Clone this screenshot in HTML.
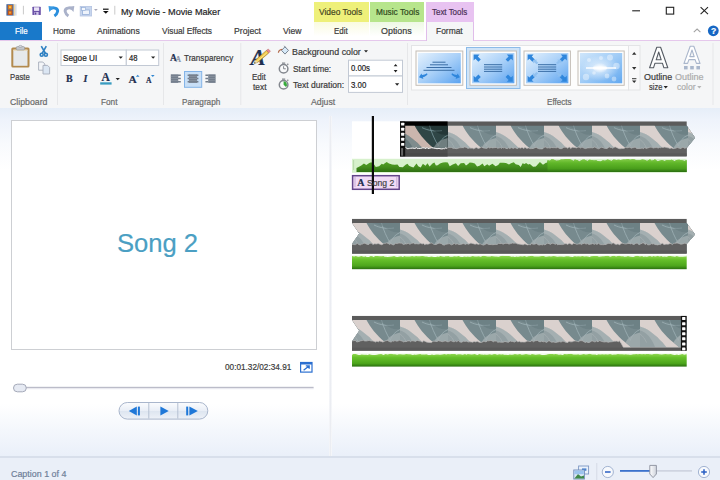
<!DOCTYPE html>
<html><head><meta charset="utf-8"><title>My Movie - Movie Maker</title>
<style>
*{box-sizing:border-box;margin:0;padding:0}
html,body{width:720px;height:480px;overflow:hidden;background:#fff}
body{position:relative;font-family:"Liberation Sans",sans-serif;font-size:9px;color:#333}
.a{position:absolute}
.t{position:absolute;white-space:nowrap;line-height:1;font-size:9px;color:#3b3b3b;-webkit-text-stroke:.2px}
.s{font-family:"Liberation Serif",serif;font-weight:bold;color:#1f3050}
#title{left:0;top:0;width:720px;height:22px;background:#fff}
#tabs{left:0;top:22px;width:720px;height:19px;background:#fff}
#file{left:0;top:22px;width:42px;height:18px;background:#1979ca}
#ribbon{left:0;top:41px;width:720px;height:67px;background:#f5f6f7}
#work{left:0;top:108px;width:720px;height:350px;background:linear-gradient(#e6eef8 0,#eef3fb 12px,#f8fafd 36px,#fff 62px,#fff 296px,#f4f7fc 322px,#e9eff9 350px)}
#status{left:0;top:456px;width:720px;height:24px;background:#eaeff8;border-top:2px solid #d8dfeb}
.ctx{position:absolute;top:2px;height:20px}
.ctxb{position:absolute;top:22px;height:18px}
.box{position:absolute;background:#fff;border:1px solid #c3cad4}
#preview{left:11px;top:120px;width:306px;height:230px;background:#fff;border:1px solid #cdcfd3}
#svg{position:absolute;left:0;top:0;width:720px;height:480px}
</style></head><body>
<div class="a" id="title"></div>
<div class="a" id="tabs"></div>
<div class="ctx" style="left:314px;width:55px;background:#eef07a"></div>
<div class="ctx" style="left:370px;width:54px;background:#b7e58c"></div>
<div class="ctx" style="left:426px;width:48px;background:#e8c3f1"></div>
<div class="ctxb" style="left:314px;width:55px;background:linear-gradient(#fafbe0,#fff 80%)"></div>
<div class="ctxb" style="left:370px;width:54px;background:linear-gradient(#eef8e4,#fff 80%)"></div>
<div class="a" style="left:0;top:40px;width:720px;height:1px;background:#e5c8ec"></div>
<div class="a" style="left:426px;top:22px;width:48px;height:19px;background:#f5f6f7;border-left:1px solid #e0bdea;border-right:1px solid #e0bdea"></div>
<div class="a" id="file"></div>
<div class="a" id="ribbon"></div>
<div class="a" id="work"></div>
<div class="a" style="left:329px;top:116px;width:3px;height:341px;background:linear-gradient(90deg,#f6f7fa,#ebedf2,#f9fafc)"></div>
<div class="a" id="status"></div>
<div class="a" id="preview"></div>
<svg id="svg" viewBox="0 0 720 480">
<defs>
<linearGradient id="gth" x1="0" y1="0" x2="1" y2="1"><stop offset="0" stop-color="#e4f1fd"/><stop offset=".5" stop-color="#a9d0f8"/><stop offset="1" stop-color="#5ba3f0"/></linearGradient>
<linearGradient id="gth4" x1="0" y1="0" x2="1" y2="1"><stop offset="0" stop-color="#cfe6fb"/><stop offset=".5" stop-color="#9fcbf6"/><stop offset="1" stop-color="#62a8f0"/></linearGradient>
<radialGradient id="glow"><stop offset="0" stop-color="#fff" stop-opacity="1"/><stop offset=".4" stop-color="#fff" stop-opacity=".55"/><stop offset="1" stop-color="#fff" stop-opacity="0"/></radialGradient>
<linearGradient id="gpill" x1="0" y1="0" x2="0" y2="1"><stop offset="0" stop-color="#fbfcfe"/><stop offset=".5" stop-color="#e9eef6"/><stop offset=".52" stop-color="#dde5f0"/><stop offset="1" stop-color="#eef2f8"/></linearGradient>
<linearGradient id="ggr" x1="0" y1="0" x2="0" y2="1"><stop offset="0" stop-color="#92d852"/><stop offset=".3" stop-color="#66c02a"/><stop offset=".75" stop-color="#4da61c"/><stop offset="1" stop-color="#2a7010"/></linearGradient>
<linearGradient id="ggd" x1="0" y1="0" x2="0" y2="1"><stop offset="0" stop-color="#5aa82c"/><stop offset=".6" stop-color="#448f1e"/><stop offset="1" stop-color="#2f6f12"/></linearGradient>
<linearGradient id="gthumb" x1="0" y1="0" x2="1" y2="0"><stop offset="0" stop-color="#fdfdfe"/><stop offset="1" stop-color="#cfd3dc"/></linearGradient>
<path id="arr" d="M0 0h5l-2.5 2.8z"/>
</defs>
<!-- window controls -->
<g stroke="#222" stroke-width="1.1" fill="none">
<path d="M632.2 10.8h7.8"/><rect x="666.3" y="7.3" width="7.4" height="6.8"/><path d="M700.6 7.2l7.4 7M708 7.2l-7.4 7"/>
</g>
<path d="M693.8 32.2l3.3-3.1 3.3 3.1" stroke="#a3a3a3" stroke-width="1.1" fill="none"/>
<circle cx="713.3" cy="30.8" r="5.4" fill="#1667c4"/>
<!-- QAT -->
<g>
<rect x="6.4" y="4.2" width="7.4" height="11.4" fill="#46669a"/>
<rect x="13.8" y="4.2" width="2.8" height="11.4" fill="#d9dfe8"/>
<rect x="13.8" y="4.2" width="1.2" height="11.4" fill="#f2d9a8"/>
<rect x="7.8" y="5" width="4.6" height="4.6" fill="#d9761e"/><rect x="7.8" y="10.4" width="4.6" height="4.6" fill="#c9581a"/>
<rect x="9" y="6.2" width="2.2" height="2" fill="#f6c040"/><rect x="9" y="11.6" width="2.2" height="2" fill="#f0a030"/>
<path d="M23.4 5.8v8.6M114.8 5.8v8.8" stroke="#c9c9c9" stroke-width="1"/>
<rect x="32.4" y="6.7" width="8.4" height="8.4" rx=".6" fill="#6b52a8"/>
<rect x="34" y="7.3" width="5.2" height="3.6" fill="#e9e2f6"/><rect x="34.4" y="12" width="4.2" height="3.1" fill="#cfc4ea"/><rect x="35" y="12.5" width="1.3" height="2.1" fill="#5a4296"/>
<path d="M50.600 8.600C54.500 7 58.200 8.400 57.600 11.600C57.200 13.600 56 15 54.400 16" stroke="#2b8fdd" stroke-width="2.900" fill="none"/><path d="M48.500 5.900l5.800.8-5 5.300z" fill="#3a9ae2"/>
<path d="M72.200 8.600C68.300 7 64.600 8.400 65.200 11.600C65.600 13.600 66.800 15 68.400 16" stroke="#aab2ca" stroke-width="2.900" fill="none"/><path d="M74.300 5.900l-5.800.8 5 5.300z" fill="#aab2ca"/>
<rect x="80.200" y="6.400" width="11.400" height="9.600" fill="#c7d6ee" stroke="#b4c4e2" stroke-width=".8"/>
<rect x="82.600" y="10" width="7" height="4.600" fill="#eef3fb" stroke="#8ea9d4" stroke-width=".7"/>
<rect x="81.600" y="7.600" width="4" height="2.800" fill="#f4f7fc" stroke="#8ea9d4" stroke-width=".6"/>
<use href="#arr" transform="translate(94 9) scale(.75)" fill="#a8a8b8"/>
<path d="M103 9.200h5.600" stroke="#111" stroke-width="1.200"/><path d="M103 10.900h5.600l-2.800 2.900z" fill="#111"/>
</g>
<!-- ribbon separators -->
<g stroke="#e6e7e9" stroke-width="1"><path d="M57.500 43v62M163.500 43v62M240.800 43v62M407.500 43v62M713 43v62"/></g>
<!-- combos -->
<g fill="#fff" stroke="#c2c9d4" stroke-width="1">
<rect x="61" y="50" width="65.300" height="15.500"/><rect x="126.300" y="50" width="32.400" height="15.500"/>
<rect x="348.500" y="60.200" width="54" height="15.800"/><rect x="348.500" y="76" width="54" height="16.400"/>
</g>
<g fill="#222">
<use href="#arr" transform="translate(118.600 56.400) scale(.85)"/><use href="#arr" transform="translate(151 56.400) scale(.85)"/>
<use href="#arr" transform="translate(115.600 77.900) scale(.85)"/>
<use href="#arr" transform="translate(364 50.300) scale(.8)"/>
<use href="#arr" transform="translate(395 83.300) scale(.85)"/>
<path d="M393.700 66.300h3.800l-1.900-2.400zM393.700 70h3.800l-1.900 2.400z"/>
</g>
<!-- paste -->
<rect x="11.300" y="47.600" width="18.200" height="20" rx="1.500" fill="#b38a4e"/>
<rect x="13.300" y="50" width="14.200" height="15.800" fill="#e6e9ec"/>
<rect x="13.300" y="49.400" width="14.200" height="1.400" fill="#e9d9b8"/><rect x="16.200" y="46.600" width="8.400" height="3.400" rx="1.200" fill="#c3c6cb" stroke="#8d9096" stroke-width=".6"/><rect x="18.800" y="45.400" width="3.200" height="2" rx="1" fill="#d9dbde" stroke="#8d9096" stroke-width=".5"/>
<!-- scissors -->
<g stroke="#2f80c2" fill="none" stroke-width="1.600"><path d="M41.300 46.200l4.200 7.300M46.300 46.200l-4.200 7.300"/><circle cx="41.700" cy="54.700" r="1.500"/><circle cx="45.900" cy="54.700" r="1.500"/></g>
<!-- copy -->
<g fill="#f3f5f8" stroke="#a6adba" stroke-width=".9"><path d="M38.600 62h4.200l2 2v6.200h-6.200z"/><path d="M43 65.400h4.600l2 2v6.600h-6.600z" fill="#dbe6f3"/></g>
<!-- font color underline -->
<rect x="100.200" y="82.300" width="11.400" height="2.300" fill="#3a9cc0"/>
<!-- grow/shrink arrows -->
<path d="M135.900 76.800l1.800-2 1.800 2z" fill="#2f86d0"/><path d="M151 75l1.800 2 1.800-2z" fill="#2f86d0"/>
<!-- align icons -->
<rect x="184.500" y="71.500" width="17.200" height="15.800" fill="#c8dff6" stroke="#84b4e8" stroke-width="1"/>
<g fill="#737e8c">
<rect x="170.800" y="74.300" width="7.400" height="8.600"/><rect x="188.900" y="74.300" width="8.200" height="8.600"/><rect x="208.200" y="74.300" width="7.400" height="8.600"/>
<path d="M178 74.500h2.800v1.500H178zM178 77.700h2.800v1.500H178zM178 80.900h2.800v1.500H178z"/>
<path d="M187.600 74.500h2v1.500h-2zM187.600 77.700h2v1.500h-2zM187.600 80.900h2v1.500h-2zM196.400 74.500h2v1.500h-2zM196.400 77.700h2v1.500h-2zM196.400 80.900h2v1.500h-2z"/>
<path d="M205.400 74.500h2.800v1.500h-2.800zM205.400 77.700h2.800v1.500h-2.800zM205.400 80.900h2.800v1.500h-2.800z"/>
</g>
<g stroke="#9aa3af" stroke-width=".5"><path d="M170.800 76.400h7.400M170.800 78.500h7.400M170.800 80.600h7.400M188.900 76.400h8.200M188.900 78.500h8.200M188.900 80.600h8.200M208.200 76.400h7.400M208.200 78.500h7.400M208.200 80.600h7.400"/></g>
<!-- paint bucket -->
<g><path d="M285 46.800l3.500 3.600-3.500 3.700-3.500-3.700z" fill="#d6e9f8" stroke="#6d7886" stroke-width=".9"/><path d="M282.200 49.400c-2.200.2-3.600 1.400-3.800 3.400" stroke="#b36b4c" stroke-width="1.200" fill="none"/><path d="M284.200 45.800l1.600 2" stroke="#6d7886" stroke-width=".8"/></g>
<!-- stopwatches -->
<g fill="#f9fafb" stroke="#83878e" stroke-width="1.500"><circle cx="283.600" cy="68.700" r="4.300"/><circle cx="283.600" cy="84.700" r="4.300"/></g>
<g stroke="#83878e" stroke-width="1.300" fill="none"><path d="M282 63.100h3.200M282 79.100h3.200M287.300 64.700l1-1M287.300 80.700l1-1"/></g>
<path d="M283.600 66.200v2.600h2.200" stroke="#83878e" stroke-width="1" fill="none"/>
<path d="M283.600 84.700v-3.400a3.400 3.400 0 0 1 2.400 5.800z" fill="#36ab3a"/>
<!-- gallery -->
<rect x="411.500" y="45.500" width="217" height="44.500" fill="#fdfdfd" stroke="#e3e4e6" stroke-width="1"/>
<rect x="628.500" y="45.500" width="11.500" height="44.500" fill="#f9f9fa" stroke="#e3e4e6" stroke-width="1"/>
<rect x="466.500" y="47.500" width="53.500" height="41" fill="#cfe4f8" stroke="#8cbbe8" stroke-width="1"/>
<g fill="#fdfdfd" stroke="#c4bdb6" stroke-width="1">
<rect x="416" y="51" width="46.800" height="34.300"/><rect x="470" y="51" width="46.400" height="34.300"/><rect x="524" y="51" width="46.400" height="34.300"/><rect x="578" y="51" width="46.200" height="34.300"/>
</g>
<rect x="418" y="53" width="42.800" height="30.300" fill="url(#gth)"/><rect x="472" y="53" width="42.400" height="30.300" fill="url(#gth)"/><rect x="526" y="53" width="42.400" height="30.300" fill="url(#gth)"/><rect x="580" y="53" width="42.200" height="30.300" fill="url(#gth4)"/>
<g stroke="#3b6ea6" stroke-width="1">
<path d="M432.500 62.200h13M430 64.800h18M426.500 67.500h25M423.500 70.300h31"/>
<path d="M484 64.700h18.200M484 67h18.200M484 69.200h18.200M484 71.400h18.200"/>
<path d="M538 64.700h18.200M538 67h18.200M538 69.200h18.200M538 71.400h18.200"/>
</g>
<g fill="#2f86dc">
<path d="M426.800 73.200l.8 1c-1.500 1.700-3 2.700-4.800 3.100l.6 1.700-4.400-1.800 2.400-3.800.6 1.600c1.800-.2 3.400-.9 4.800-1.800z"/>
<path d="M452.200 73.200l-.8 1c1.500 1.700 3 2.700 4.800 3.100l-.6 1.700 4.400-1.800-2.400-3.800-.6 1.600c-1.800-.2-3.400-.9-4.800-1.800z"/>
<g id="ca"><path d="M473.600 54.600h6l-1.800 1.800 3 3-2.400 2.400-3-3-1.800 1.800z"/><path d="M512.800 54.600v6l-1.800-1.800-3 3-2.400-2.400 3-3-1.800-1.800z"/><path d="M473.600 81.700v-6l1.800 1.800 3-3 2.400 2.400-3 3 1.800 1.800z"/><path d="M512.800 81.700h-6l1.800-1.800-3-3 2.400-2.400 3 3 1.800-1.800z"/></g>
<use href="#ca" x="54"/>
<g fill="#8fc0f0" opacity=".9"><use href="#ca" transform="translate(547.200 68.150) scale(.72 .62) translate(-493.200 -68.150)"/></g>
</g>
<!-- sparkle thumb -->
<g><ellipse cx="600" cy="68" rx="19" ry="13" fill="url(#glow)" opacity=".75"/><ellipse cx="600" cy="68" rx="8" ry="5" fill="url(#glow)"/><rect x="586" y="67.200" width="30" height="1.600" fill="#fff" opacity=".9"/><rect x="593" y="66.600" width="14" height="2.800" rx="1.400" fill="#fff" opacity=".8"/>
<g fill="#fff" opacity=".4"><circle cx="610" cy="57.500" r="3"/><circle cx="616.500" cy="66" r="3.200"/><circle cx="607" cy="76" r="2.400"/><circle cx="589" cy="60" r="2"/><circle cx="586" cy="77" r="3.200"/><circle cx="614" cy="79" r="2.400"/><circle cx="594" cy="73" r="1.800"/><circle cx="601" cy="58" r="2"/></g></g>
<!-- gallery scroll -->
<g fill="#333"><path d="M632 54.800h4.400l-2.200-2.700zM632 67h4.400l-2.200 2.700zM632 80.400h4.400l-2.200 2.700z"/><rect x="632" y="78.200" width="4.400" height="1"/></g>
<!-- outline A icons -->
<g fill="#fff" stroke-linejoin="round">
<path d="M649.600 67.800l7.200-20.600h3.800l7.200 20.600h-3.900l-1.500-4.600h-7.400l-1.500 4.600zM656.200 59.800h5l-2.500-7.800z" stroke="#555b63" stroke-width="1.100" fill-rule="evenodd"/>
<path d="M684 63.400l6.200-17.200h3.600l6.200 17.200h-3.600l-1.300-3.800h-6.200l-1.300 3.800zM689.800 56.600h4.400l-2.200-6.600z" stroke="#a9b6cb" stroke-width="1.100" fill-rule="evenodd"/>
</g>
<g fill="#a9b6cb"><rect x="684" y="66" width="3.600" height="3.400"/><rect x="690.200" y="66" width="3.600" height="3.400"/><rect x="696.400" y="66" width="3.600" height="3.400"/></g>
<use href="#arr" transform="translate(663.600 86) scale(.85)" fill="#222"/><use href="#arr" transform="translate(697.200 86) scale(.85)" fill="#b5b5b5"/>
<!-- fullscreen icon -->
<rect x="300.600" y="362.500" width="11.400" height="9.600" fill="#fff" stroke="#2b6fd0" stroke-width="1.200"/>
<rect x="300.600" y="362.500" width="11.400" height="2" fill="#2b6fd0"/>
<path d="M303.600 370.200l5.400-4.200M305.800 365.800h3.400v3" stroke="#2b6fd0" stroke-width="1.300" fill="none"/>
<!-- seek -->
<rect x="20" y="386.800" width="293.600" height="1.400" fill="#bbbcc9"/><rect x="20" y="388.200" width="293.600" height="1" fill="#e6e7ee"/>
<rect x="13.500" y="384.200" width="12.800" height="7.600" rx="3.800" fill="#e6eaf3" stroke="#a4a9b8" stroke-width="1"/>
<!-- play pill -->
<rect x="119" y="402.500" width="88.800" height="16.600" rx="8.300" fill="url(#gpill)" stroke="#a9b6cc" stroke-width="1"/>
<path d="M148.800 403v15.600M177.800 403v15.600" stroke="#b5c0d2" stroke-width="1"/>
<g fill="#1f78d8"><path d="M136.800 406.600v8.800l-8-4.400z"/><rect x="137.900" y="406.600" width="2" height="8.800"/>
<path d="M160.400 406.400v9.200l8.300-4.600z"/>
<rect x="186.200" y="406.600" width="2" height="8.800"/><path d="M189.400 406.600v8.800l8.400-4.400z"/></g>
<!-- status controls -->
<path d="M596.800 463v17" stroke="#d5dbe6" stroke-width="1"/>
<g><rect x="578.600" y="466" width="10" height="8" fill="#eaf1fb" stroke="#7d97c4" stroke-width=".9"/><rect x="582" y="468.400" width="4.400" height="2.400" fill="#4a82d0"/>
<rect x="573.800" y="470" width="10.600" height="9" fill="#dbe7f6" stroke="#6f8ab8" stroke-width=".9"/><path d="M574.400 478.400l3.600-4.400 3 2.600 3-1v2.800z" fill="#3f8a4a"/><rect x="574.400" y="470.600" width="9.400" height="3.600" fill="#9cc4ee"/></g>
<g fill="#f7f9fd" stroke="#a3b4d2" stroke-width="1"><circle cx="607.800" cy="472" r="5.600"/><circle cx="704" cy="472" r="5.600"/></g>
<path d="M605 472h5.600M701.200 472h5.600M704 469.200v5.600" stroke="#2a5fc4" stroke-width="1.500"/>
<rect x="620" y="470" width="33" height="1.800" fill="#3c72cc"/><rect x="653" y="470.200" width="39" height="1.400" fill="#c9cedb"/>
<path d="M649.800 465.400h6.600v8.600l-3.300 3.600-3.300-3.600z" fill="url(#gthumb)" stroke="#8a8f9c" stroke-width=".9"/>
<defs><symbol id="fs" viewBox="0 0 48 28" preserveAspectRatio="none">
<rect width="48" height="28" fill="#2f4646"/>
<path d="M0 6C8 8 16 15.500 22.500 22.500L27.500 28H0z" fill="#7f8c8d"/>
<path d="M0 10.500c5 1 9.500 5.500 13 12l2.500 5.500H0z" fill="#66777a"/>
<path d="M0 14c3 2 5 5 6.500 8.500" stroke="#7f8c8d" stroke-width=".8" fill="none"/>
<path d="M0 0h14.500c3.500 6.500 9.500 15 19 22.500l6.500 5.500h-13L22.500 22.500C16 15.500 8 8.500 0 6.500z" fill="#cbb6ae"/>
<path d="M29.500 0c2 7 5 14 9 20.500M22 2c6 3 13 4 20 3M38 20.500c2-5 5-9 10-11" stroke="#8fb0b6" stroke-width=".9" fill="none" opacity=".7"/>
<path d="M33.500 22.500c2.500-5 7-8.500 14.500-10V28h-8z" fill="#7f8c8d" opacity=".8"/>
<path d="M20 0h28v9c-6 1-10-1-14-4-3-2-8-4-14-5z" fill="#0e1c1c" opacity=".35"/>
</symbol><symbol id="fw" viewBox="0 0 48 28" preserveAspectRatio="none">
<rect width="48" height="28" fill="#778a8e"/>
<path d="M0 6C8 8 16 15.500 22.500 22.500L27.500 28H0z" fill="#a4afb1"/>
<path d="M0 10.500c5 1 9.500 5.500 13 12l2.500 5.500H0z" fill="#93a0a3"/>
<path d="M0 14c3 2 5 5 6.500 8.500" stroke="#a4afb1" stroke-width=".8" fill="none"/>
<path d="M0 0h14.500c3.500 6.500 9.500 15 19 22.500l6.500 5.500h-13L22.500 22.500C16 15.500 8 8.500 0 6.500z" fill="#dad1ce"/>
<path d="M29.500 0c2 7 5 14 9 20.500M22 2c6 3 13 4 20 3M38 20.500c2-5 5-9 10-11" stroke="#a9bcc1" stroke-width=".9" fill="none" opacity=".7"/>
<path d="M33.500 22.500c2.500-5 7-8.500 14.500-10V28h-8z" fill="#a4afb1" opacity=".8"/>
<path d="M20 0h28v9c-6 1-10-1-14-4-3-2-8-4-14-5z" fill="#5d7075" opacity=".35"/>
</symbol></defs>
<rect x="352" y="121.300" width="48" height="37.700" fill="#fff"/>
<clipPath id="c121"><path d="M400 121.3L686.7 121.3L686.7 125.6L695.1 137.8L686.7 147.9L686.7 156.6L400 156.6z"/></clipPath>
<g clip-path="url(#c121)">
<rect x="400" y="121.3" width="296.7" height="35.3" fill="#5b5b5b"/>
<use href="#fw" x="400" y="125.6" width="48" height="28"/>
<use href="#fw" x="448" y="125.6" width="48" height="28"/>
<use href="#fw" x="496" y="125.6" width="48" height="28"/>
<use href="#fw" x="544" y="125.6" width="48" height="28"/>
<use href="#fw" x="592" y="125.6" width="48" height="28"/>
<use href="#fw" x="640" y="125.6" width="48" height="28"/>
<use href="#fw" x="688" y="125.6" width="48" height="28"/>
<rect x="400" y="121.3" width="47.6" height="35.3" fill="#000"/>
<svg x="400" y="125.6" width="47.6" height="28" viewBox="0 0 47.6 28"><use href="#fs" x="0" y="0" width="48" height="28"/></svg>
<path d="M400 156.6L400 147.4L401.4 147.5L403 148L403.9 147L405.7 147.2L406.8 148.6L408.1 148.7L409.5 148.4L410.5 148.3L412.3 148.1L414 148.3L414.9 148.5L416.4 147.7L417.3 148.5L418.6 148.5L420.5 148.5L422.3 147.9L424.1 147.8L426 148.6L426.9 147.4L428 148.6L429.3 148.3L430.5 148L431.8 147.7L433.3 148L435.1 148.3L437 148.7L439 148.4L440 148.7L441.9 148.9L443.4 148.6L444.5 148.7L445.9 147.8L446.8 148.5L448.8 147.3L450.5 147.6L451.5 147.4L453.2 148.4L454.1 148.3L455 148.4L456.2 148.7L458.2 148.2L460.1 147.6L461.1 148L461.9 147.4L463.2 147.9L464.2 147.1L466.1 147.3L468 148.4L469.2 148L470.7 148.2L472.2 148.1L473.7 148.8L475.1 148L476.8 147.5L477.9 148.6L479.4 148.2L480.2 147.8L481.7 147L483.2 147.9L484.1 148.1L485.5 148.3L486.7 148.4L488.4 147.2L489.3 148L491.2 147.5L492.6 147.9L493.8 147.7L495 147.6L496.5 147.4L497.7 148.3L498.6 148.1L500.3 147.6L501.4 148.4L502.5 147.5L503.8 148.1L504.7 147.6L506 148.4L507.3 148.7L508.3 147.8L509.9 148.6L511.2 147.6L512.2 147.9L513.3 148.4L515 147.5L516.2 148.3L517.8 148.6L519 147.4L520.1 148.3L521.3 147.7L522.6 147.7L523.9 148.6L524.9 147.2L526.8 148.4L528.7 147.9L530.7 148.7L531.7 148.6L533.5 148.4L534.9 147.7L536.2 147.3L537.1 147.9L538.2 148.5L539.1 148.8L540.7 148.9L542.6 148.9L544.1 147.3L545.8 147.1L546.9 148L548.4 147.8L550.2 148.1L551.5 147.5L553.3 147.7L555 147.6L556.1 147.9L557.8 147.3L559.5 148.5L561.3 148.7L562.1 148.4L563.9 147.2L565.1 147.3L566.5 147.6L567.9 148.3L568.7 147.2L569.7 147L570.6 148.5L572.4 147.3L573.8 147.4L575 147.5L576.6 147.9L577.8 147.3L579 147L580.5 148L581.8 147.2L582.8 147.5L584.3 148.3L585.6 148.6L587.1 148L588.4 147.9L590 147.8L591.6 147.8L592.7 147.9L594.3 147.1L595.7 147.5L597.5 148.6L598.7 148.8L600.5 147.7L601.8 147.2L603.6 148L605.4 148.5L607 148.5L608.5 147.4L610 146.8L611 148.1L611.9 147.2L612.8 148.4L613.9 147.2L615.6 147L617.4 147.9L619.2 148.7L620.7 148.7L621.6 148.6L623 148.5L623.9 148.5L625.8 147.3L627 147.8L628.8 147.4L629.8 147.3L631.4 148.2L632.7 147.7L633.9 147.6L635.2 147L636.6 148.5L637.9 148.5L639 148.4L640.7 148.4L642.1 148L643.6 148.7L644.6 147.4L646.3 148.5L647.7 148L649.4 147.4L650.5 147.2L652 147.3L653.1 148.1L655 147.6L656.7 147.6L658.5 148L659.6 147.4L660.5 147.7L661.7 147.2L663 147.4L664.7 147.1L666.6 147.6L668.1 147.8L669.9 148.4L671.4 148L673 148.6L674.3 148.5L676.2 148L677.3 147.5L679 148.1L680.9 148.6L682 147.5L683.1 147.2L684.8 148.3L686.6 147.6L688.4 147.5L689.7 148.2L690.7 147.2L692.4 147.3L693.7 147.9L695.3 147L696.5 147.5L696.7 147.9L696.7 156.6z" fill="#606060"/>
<path d="M400 147.4L401.4 147.5L403 148L403.9 147L405.7 147.2L406.8 148.6L408.1 148.7L409.5 148.4L410.5 148.3L412.3 148.1L414 148.3L414.9 148.5L416.4 147.7L417.3 148.5L418.6 148.5L420.5 148.5L422.3 147.9L424.1 147.8L426 148.6L426.9 147.4L428 148.6L429.3 148.3L430.5 148L431.8 147.7L433.3 148L435.1 148.3L437 148.7L439 148.4L440 148.7L441.9 148.9L443.4 148.6L444.5 148.7L445.9 147.8L446.8 148.5L448.8 147.3L450.5 147.6L451.5 147.4L453.2 148.4L454.1 148.3L455 148.4L456.2 148.7L458.2 148.2L460.1 147.6L461.1 148L461.9 147.4L463.2 147.9L464.2 147.1L466.1 147.3L468 148.4L469.2 148L470.7 148.2L472.2 148.1L473.7 148.8L475.1 148L476.8 147.5L477.9 148.6L479.4 148.2L480.2 147.8L481.7 147L483.2 147.9L484.1 148.1L485.5 148.3L486.7 148.4L488.4 147.2L489.3 148L491.2 147.5L492.6 147.9L493.8 147.7L495 147.6L496.5 147.4L497.7 148.3L498.6 148.1L500.3 147.6L501.4 148.4L502.5 147.5L503.8 148.1L504.7 147.6L506 148.4L507.3 148.7L508.3 147.8L509.9 148.6L511.2 147.6L512.2 147.9L513.3 148.4L515 147.5L516.2 148.3L517.8 148.6L519 147.4L520.1 148.3L521.3 147.7L522.6 147.7L523.9 148.6L524.9 147.2L526.8 148.4L528.7 147.9L530.7 148.7L531.7 148.6L533.5 148.4L534.9 147.7L536.2 147.3L537.1 147.9L538.2 148.5L539.1 148.8L540.7 148.9L542.6 148.9L544.1 147.3L545.8 147.1L546.9 148L548.4 147.8L550.2 148.1L551.5 147.5L553.3 147.7L555 147.6L556.1 147.9L557.8 147.3L559.5 148.5L561.3 148.7L562.1 148.4L563.9 147.2L565.1 147.3L566.5 147.6L567.9 148.3L568.7 147.2L569.7 147L570.6 148.5L572.4 147.3L573.8 147.4L575 147.5L576.6 147.9L577.8 147.3L579 147L580.5 148L581.8 147.2L582.8 147.5L584.3 148.3L585.6 148.6L587.1 148L588.4 147.9L590 147.8L591.6 147.8L592.7 147.9L594.3 147.1L595.7 147.5L597.5 148.6L598.7 148.8L600.5 147.7L601.8 147.2L603.6 148L605.4 148.5L607 148.5L608.5 147.4L610 146.8L611 148.1L611.9 147.2L612.8 148.4L613.9 147.2L615.6 147L617.4 147.9L619.2 148.7L620.7 148.7L621.6 148.6L623 148.5L623.9 148.5L625.8 147.3L627 147.8L628.8 147.4L629.8 147.3L631.4 148.2L632.7 147.7L633.9 147.6L635.2 147L636.6 148.5L637.9 148.5L639 148.4L640.7 148.4L642.1 148L643.6 148.7L644.6 147.4L646.3 148.5L647.7 148L649.4 147.4L650.5 147.2L652 147.3L653.1 148.1L655 147.6L656.7 147.6L658.5 148L659.6 147.4L660.5 147.7L661.7 147.2L663 147.4L664.7 147.1L666.6 147.6L668.1 147.8L669.9 148.4L671.4 148L673 148.6L674.3 148.5L676.2 148L677.3 147.5L679 148.1L680.9 148.6L682 147.5L683.1 147.2L684.8 148.3L686.6 147.6L688.4 147.5L689.7 148.2L690.7 147.2L692.4 147.3L693.7 147.9L695.3 147L696.5 147.5L696.7 147.9" stroke="#b9b9b9" stroke-width=".8" fill="none" opacity=".85"/>
<rect x="400" y="153.4" width="286.7" height="3.200" fill="#555" opacity=".6"/>
<rect x="400" y="147.9" width="47.6" height="8.7" fill="#000" opacity=".18"/>
<path d="M405.7 147.2L406.8 148.6L408.1 148.7L409.5 148.4L410.5 148.3L412.3 148.1L414 148.3L414.9 148.5L416.4 147.7L417.3 148.5L418.6 148.5L420.5 148.5L422.3 147.9L424.1 147.8L426 148.6L426.9 147.4L428 148.6L429.3 148.3L430.5 148L431.8 147.7L433.3 148L435.1 148.3L437 148.7L439 148.4L440 148.7L441.9 148.9L443.4 148.6L444.5 148.7L445.9 147.8L446.8 148.5" stroke="#f0f0f0" stroke-width="1" fill="none"/>
<rect x="400" y="121.3" width="5.200" height="35.3" fill="#111"/>
<rect x="401.1" y="122.7" width="3.200" height="2.900" rx=".5" fill="#fff"/>
<rect x="401.1" y="127.8" width="3.200" height="2.900" rx=".5" fill="#fff"/>
<rect x="401.1" y="132.8" width="3.200" height="2.900" rx=".5" fill="#fff"/>
<rect x="401.1" y="137.8" width="3.200" height="2.900" rx=".5" fill="#fff"/>
<rect x="401.1" y="142.9" width="3.200" height="2.900" rx=".5" fill="#fff"/>
<rect x="401.1" y="148.1" width="2" height="7.600" fill="#8a8a8a" opacity=".7"/>
</g>
<rect x="352" y="158.800" width="334.700" height="14" fill="#d7f1cc"/>
<path d="M356.5 171.9L356.5 168L359 166.7L361.3 165.5L363.9 163.6L366.3 165L369.3 163L371.3 162.2L374.3 164.8L375.8 167.1L379.1 166.3L381.8 163.7L383.2 164.6L384.8 163.3L386.7 162.1L389 163.6L392.1 164.5L394.7 164.7L397.5 164.6L399.4 167L402.8 167.2L405.6 164.8L407.5 163.8L409 165.7L411.2 166.7L413.4 167.6L416.5 163.4L418.3 166.2L420.7 167.6L422.9 163.8L425.5 165.7L427.5 163.2L429.6 166.4L432.5 163.6L434.4 162.5L435.9 165.4L437.7 165.3L440 163.5L442.9 162.6L445.5 162.2L447.8 162.6L449.7 166.2L452.7 164.4L455.9 163.3L458.1 165.9L460.7 163.3L464.1 162.9L466 165.4L468.1 164.1L469.7 162.6L472.2 162.8L474.8 163.5L477.1 166.5L479.5 165.7L482.6 163.6L484.3 166.3L487.3 164.2L489.1 165.7L492.4 163.7L495.6 166.2L498.2 164.9L499.9 162.7L503.2 162.8L506 163L509 164.6L511 163.2L513.8 162.2L515.7 164.2L518.8 165.1L520.7 166.9L522.6 163.3L524.5 164L526.1 163L528.2 164.5L529.9 164.1L533.1 166.8L535.8 166.4L538.3 163.7L539.9 162.1L543 164.8L546.3 162.6L547 163L547.5 160.2L547.5 160.3L550 160.8L551.5 159.3L553.5 159.6L556.3 160.7L558.7 160.6L561.1 159.6L563.2 159.4L566.1 159.1L568.9 159.1L571.4 159.8L573.5 161.1L574.8 159.5L577.8 160.2L579.2 161.5L582.2 159.7L584.3 159.4L586.2 160.5L587.8 160.9L589.2 159.7L591.9 160L594 160.6L596.1 160.2L597.5 160.9L600.5 161.6L603 160.3L605 160.8L607.5 159.6L609.2 159.9L611.4 161L613.6 159.4L616.4 160L618.6 159.7L620.7 160L623.4 159.4L625.7 159.4L628.2 159.1L630 159.8L632.5 159.2L634.6 159.5L636.4 160.2L639.4 160.3L642.4 159.6L645.4 159.9L647 160.9L650 159.3L651.7 160.8L653.7 159.9L655 159.2L657.4 161.3L660.5 160.6L661.9 160L664.6 161.1L667 159.9L669.3 160.2L671.7 159.8L674.7 161.2L676.3 160.1L679.1 159.8L682.1 160.3L684.7 160.9L686.3 160L686.7 160.4L686.7 171.9z" fill="url(#ggd)"/>
<path d="M547.5 171.9L547.5 160.2L547.5 160.3L550 160.8L551.5 159.3L553.5 159.6L556.3 160.7L558.7 160.6L561.1 159.6L563.2 159.4L566.1 159.1L568.9 159.1L571.4 159.8L573.5 161.1L574.8 159.5L577.8 160.2L579.2 161.5L582.2 159.7L584.3 159.4L586.2 160.5L587.8 160.9L589.2 159.7L591.9 160L594 160.6L596.1 160.2L597.5 160.9L600.5 161.6L603 160.3L605 160.8L607.5 159.6L609.2 159.9L611.4 161L613.6 159.4L616.4 160L618.6 159.7L620.7 160L623.4 159.4L625.7 159.4L628.2 159.1L630 159.8L632.5 159.2L634.6 159.5L636.4 160.2L639.4 160.3L642.4 159.6L645.4 159.9L647 160.9L650 159.3L651.7 160.8L653.7 159.9L655 159.2L657.4 161.3L660.5 160.6L661.9 160L664.6 161.1L667 159.9L669.3 160.2L671.7 159.8L674.7 161.2L676.3 160.1L679.1 159.8L682.1 160.3L684.7 160.9L686.3 160L686.7 160.4L686.7 171.9z" fill="url(#ggr)" opacity=".75"/>
<path d="M353.600 160.500v10" stroke="#8ab07a" stroke-width=".8" stroke-dasharray="1 1"/>
<rect x="352.600" y="175.700" width="46.600" height="13.600" fill="#f1dbf6" stroke="#63458a" stroke-width="1.500"/>
<path d="M355 177.500v10M396.800 177.500v10" stroke="#8b6aa8" stroke-width=".8" stroke-dasharray="1 1"/>
<clipPath id="c218"><path d="M352 218.7L686.7 218.7L686.7 223L695.1 234.5L686.7 244L686.7 253.7L352 253.7L352 244L359.2 233.5L352 223z"/></clipPath>
<g clip-path="url(#c218)">
<rect x="352" y="218.7" width="344.7" height="35" fill="#5b5b5b"/>
<use href="#fw" x="352" y="223" width="48" height="28"/>
<use href="#fw" x="400" y="223" width="48" height="28"/>
<use href="#fw" x="448" y="223" width="48" height="28"/>
<use href="#fw" x="496" y="223" width="48" height="28"/>
<use href="#fw" x="544" y="223" width="48" height="28"/>
<use href="#fw" x="592" y="223" width="48" height="28"/>
<use href="#fw" x="640" y="223" width="48" height="28"/>
<use href="#fw" x="688" y="223" width="48" height="28"/>
<path d="M352 253.7L352 244.2L353.7 244.6L355.6 244.6L357.4 243.3L358.8 244.6L360.4 244.9L361.3 244.2L362.5 244.1L363.9 243.2L365 243.3L366.9 244.3L367.9 244.6L368.9 244.4L369.9 243.2L371.7 243.2L372.8 244.6L374.6 243.8L376.5 244L378.1 243.5L380 244.2L381.9 244.8L383.1 244L384.1 243.3L385 243.4L386.6 242.9L388.2 243.4L389.3 244.4L390.7 243.8L392.1 244.3L393 245L393.9 244.7L395.7 243.3L397.4 243.6L398.9 243L399.8 243.1L401.7 243.2L403.4 244.5L405.2 243.9L406.5 244L408.2 243.3L409.9 244.3L411.7 243.3L413.6 243L414.8 243.9L416.7 243.7L418.5 244L419.7 243.7L420.8 243.1L421.8 244.1L423.7 243.4L424.6 244.7L426.1 244L427.2 244.2L428.9 244L430.2 243.2L432.1 242.9L433.5 244.3L434.5 244.5L436.4 244.4L438.1 243.4L439.4 243.2L441.2 243.4L442.6 244.7L444.4 245.1L445.7 244.3L447.4 244.1L448.5 243.8L449.5 243.7L451.5 244.8L453 244.2L454.3 243.3L455.4 244.3L457.2 243.8L458.9 244.5L460.6 244.4L462.2 243.9L463.9 243.6L465.3 244.4L466.9 243.7L468.8 244.2L470.3 243.2L471.7 243.3L473.3 243.7L475.1 244.2L476.8 243.8L478.4 244.4L480.1 243.8L481.9 244.6L483.5 245.1L485.4 244.3L486.9 243.5L488.6 244.6L490 244.5L491.7 244.6L492.7 244.7L494.2 244.5L495.5 244.4L497.2 244.4L498.8 243.2L499.9 243.7L501.4 243.4L503 244.1L503.9 244L505 243.2L506 243.4L507.1 243.3L507.9 243.7L509.2 244.1L510.7 243.6L512.6 243L513.8 243.3L515.1 243.1L516.9 243.5L517.8 244.1L518.7 244.1L520 244.2L521.9 244.6L523.2 244.8L524.7 244L525.7 244.2L527.2 244.9L529.1 244.5L530.4 244.9L531.2 243.5L532.7 244.1L533.7 244.3L535.5 243.9L536.8 243.5L538 244.7L539.3 245L541.1 244.5L542.3 245L543.7 244.2L544.9 244.9L546.3 243.9L547.6 243.3L549.2 243.7L550.3 244.4L552.1 243.2L553.5 243.4L555.4 244.3L556.5 243.7L557.6 244.8L558.7 244.4L560.1 244.4L561.6 244.6L562.6 244.6L563.8 244.3L565 243.7L566.4 243.8L567.7 244.4L569.2 243.3L570.3 243.7L572.1 244.6L573.6 243.3L575.3 243.7L576.8 244.3L578.3 244L580.2 243.8L581.5 244.6L582.5 243.8L584.3 243.2L586.1 244.1L587.4 243.6L589.1 244.6L590.1 244.2L591.6 244L592.8 243.4L594.3 244.4L595.2 243.6L597 244.4L598.5 243.3L600.2 244.6L602.2 244.6L603 244.8L604.1 244.5L606 244.5L607 243.8L608.9 243.3L610.4 243.6L611.4 244.1L612.3 243.3L613.6 243L614.5 243.8L616.2 244.6L617.2 244.1L618.4 244.2L619.7 244.9L621 243.4L622.6 243.2L624.2 243.8L626 244L627.6 243.6L629 243.4L630.7 243.9L631.7 243.5L633 244.3L634 244.5L635.6 243.4L637.2 243.1L638.1 243.9L639.2 244.7L640.6 243.9L642.4 243.1L644 242.9L645 244.5L646.6 243.6L647.6 244.8L649.2 244.8L650.2 244.5L651.4 243.7L652.6 244.1L653.8 243.8L654.8 244.5L656.4 244.7L657.7 244.9L659.1 244.4L660.6 244.6L661.9 243.4L662.8 243.3L663.7 244.5L665.1 244.6L665.9 244.1L667.7 244.3L669.1 244L670 243.4L671 243.6L672.3 244.6L673.3 243.7L674.5 243.3L675.6 243.3L677 242.9L678.9 243.4L680.8 244.2L682.4 244L684.3 243.3L685.8 243.4L687.4 244.2L688.5 243.5L689.3 243.4L690.3 243.6L692.2 243.6L693.4 243.8L694.5 244.4L696.2 243.5L696.7 244L696.7 253.7z" fill="#606060"/>
<path d="M352 244.2L353.7 244.6L355.6 244.6L357.4 243.3L358.8 244.6L360.4 244.9L361.3 244.2L362.5 244.1L363.9 243.2L365 243.3L366.9 244.3L367.9 244.6L368.9 244.4L369.9 243.2L371.7 243.2L372.8 244.6L374.6 243.8L376.5 244L378.1 243.5L380 244.2L381.9 244.8L383.1 244L384.1 243.3L385 243.4L386.6 242.9L388.2 243.4L389.3 244.4L390.7 243.8L392.1 244.3L393 245L393.9 244.7L395.7 243.3L397.4 243.6L398.9 243L399.8 243.1L401.7 243.2L403.4 244.5L405.2 243.9L406.5 244L408.2 243.3L409.9 244.3L411.7 243.3L413.6 243L414.8 243.9L416.7 243.7L418.5 244L419.7 243.7L420.8 243.1L421.8 244.1L423.7 243.4L424.6 244.7L426.1 244L427.2 244.2L428.9 244L430.2 243.2L432.1 242.9L433.5 244.3L434.5 244.5L436.4 244.4L438.1 243.4L439.4 243.2L441.2 243.4L442.6 244.7L444.4 245.1L445.7 244.3L447.4 244.1L448.5 243.8L449.5 243.7L451.5 244.8L453 244.2L454.3 243.3L455.4 244.3L457.2 243.8L458.9 244.5L460.6 244.4L462.2 243.9L463.9 243.6L465.3 244.4L466.9 243.7L468.8 244.2L470.3 243.2L471.7 243.3L473.3 243.7L475.1 244.2L476.8 243.8L478.4 244.4L480.1 243.8L481.9 244.6L483.5 245.1L485.4 244.3L486.9 243.5L488.6 244.6L490 244.5L491.7 244.6L492.7 244.7L494.2 244.5L495.5 244.4L497.2 244.4L498.8 243.2L499.9 243.7L501.4 243.4L503 244.1L503.9 244L505 243.2L506 243.4L507.1 243.3L507.9 243.7L509.2 244.1L510.7 243.6L512.6 243L513.8 243.3L515.1 243.1L516.9 243.5L517.8 244.1L518.7 244.1L520 244.2L521.9 244.6L523.2 244.8L524.7 244L525.7 244.2L527.2 244.9L529.1 244.5L530.4 244.9L531.2 243.5L532.7 244.1L533.7 244.3L535.5 243.9L536.8 243.5L538 244.7L539.3 245L541.1 244.5L542.3 245L543.7 244.2L544.9 244.9L546.3 243.9L547.6 243.3L549.2 243.7L550.3 244.4L552.1 243.2L553.5 243.4L555.4 244.3L556.5 243.7L557.6 244.8L558.7 244.4L560.1 244.4L561.6 244.6L562.6 244.6L563.8 244.3L565 243.7L566.4 243.8L567.7 244.4L569.2 243.3L570.3 243.7L572.1 244.6L573.6 243.3L575.3 243.7L576.8 244.3L578.3 244L580.2 243.8L581.5 244.6L582.5 243.8L584.3 243.2L586.1 244.1L587.4 243.6L589.1 244.6L590.1 244.2L591.6 244L592.8 243.4L594.3 244.4L595.2 243.6L597 244.4L598.5 243.3L600.2 244.6L602.2 244.6L603 244.8L604.1 244.5L606 244.5L607 243.8L608.9 243.3L610.4 243.6L611.4 244.1L612.3 243.3L613.6 243L614.5 243.8L616.2 244.6L617.2 244.1L618.4 244.2L619.7 244.9L621 243.4L622.6 243.2L624.2 243.8L626 244L627.6 243.6L629 243.4L630.7 243.9L631.7 243.5L633 244.3L634 244.5L635.6 243.4L637.2 243.1L638.1 243.9L639.2 244.7L640.6 243.9L642.4 243.1L644 242.9L645 244.5L646.6 243.6L647.6 244.8L649.2 244.8L650.2 244.5L651.4 243.7L652.6 244.1L653.8 243.8L654.8 244.5L656.4 244.7L657.7 244.9L659.1 244.4L660.6 244.6L661.9 243.4L662.8 243.3L663.7 244.5L665.1 244.6L665.9 244.1L667.7 244.3L669.1 244L670 243.4L671 243.6L672.3 244.6L673.3 243.7L674.5 243.3L675.6 243.3L677 242.9L678.9 243.4L680.8 244.2L682.4 244L684.3 243.3L685.8 243.4L687.4 244.2L688.5 243.5L689.3 243.4L690.3 243.6L692.2 243.6L693.4 243.8L694.5 244.4L696.2 243.5L696.7 244" stroke="#b9b9b9" stroke-width=".8" fill="none" opacity=".85"/>
<rect x="352" y="250.5" width="334.7" height="3.200" fill="#555" opacity=".6"/>
</g>
<rect x="352" y="255.600" width="334.700" height="13.600" fill="url(#ggr)"/>
<path d="M352 255L352 256L354.1 256.5L355.8 256.1L358.1 256.7L359.9 256.5L361.3 255.9L362.9 256.4L364.1 256.7L365.5 256.2L366.7 256.9L368.8 256.9L370.8 256L372.3 256.3L373.6 256.9L375.2 256.1L377.4 255.9L379.8 256.3L381.7 256.2L383.5 256L384.6 256.7L386.1 256.8L387.4 257L389.8 256.8L392 256.6L394.1 256L395.9 256.7L397.2 256.9L399.6 256.4L401.2 256.3L402.8 256.9L404.5 256L405.7 256.6L408.2 256.4L410 256.5L412.1 256.1L414.1 256.4L416.1 256L417.4 256.2L419.8 256.2L421.8 256.1L423 255.9L425.2 256.6L426.9 256.6L428.9 256.9L431.4 256.4L433.9 256.9L435.8 256.9L437.6 256.4L439 256.8L440.3 256L442.6 256.6L444.4 256.8L445.5 256.2L447 256.3L448.3 255.9L449.9 256.7L452.4 256.7L454.2 256.2L456.6 256.4L458.8 255.9L460.1 256.7L462.4 256.9L464.3 256.4L466.2 256.8L467.8 256.5L469.2 256.7L470.3 256.7L472.8 255.9L474.7 256.5L477 256.5L478.5 256.3L480.9 256.8L482.2 256L483.4 255.8L485.1 255.9L487.5 256.5L488.7 256.5L490.3 256.4L491.7 256L493 256.2L495.1 256.4L496.3 256.6L498.6 256.8L500.8 255.9L502.6 255.8L504.8 255.9L506.9 256L509 256.1L510.1 256.2L511.6 256.8L513.1 256.5L515 256.9L516.2 256.6L518 256.7L520.5 256.2L522.6 256.4L524.5 255.9L526.7 256.8L528.3 256.3L530.8 255.9L532 255.8L534.3 256.6L536 256.6L537.1 256.6L538.8 256.5L540.5 256.3L541.9 255.9L543.6 256L545.7 256.7L547.8 256.4L549.2 256.3L551 256.5L553.5 256L555.2 256.3L557.3 256.8L559.5 256.6L561.7 256.6L564 256.7L566.1 256.2L568.5 256.2L570.5 256.7L572.9 257L574 256.3L575.5 256.3L576.8 256.4L578 256.2L580.5 256.6L582.2 256L584.7 256.5L586 256.2L588.1 256.6L589.5 256.9L591.1 256.2L593.3 256L595.4 256L597.4 256.1L599 256.8L600.7 256.4L602.7 256.2L604 256.2L605.5 256L608 255.8L610.2 256.8L612.3 255.9L614.1 255.8L616.1 256.5L617.5 255.9L619.4 255.8L620.9 256.2L623.2 256.2L624.5 256.7L626.8 256.5L627.9 256.1L629.6 256.4L631 256.7L633.3 256.9L635.6 256L637.6 255.8L639.9 256.6L642.1 256.1L643.3 256.7L645.2 256.6L647 256.8L648.6 256.2L650.1 256.1L652.1 256.8L653.3 256L655.1 256.5L656.5 256.2L657.6 255.8L659.4 256.5L661.5 256L662.7 256.8L664.5 256.4L666.6 256.7L668.5 256L670.7 256L671.9 256.2L673.7 256.5L675 256.7L676.8 256.1L679.1 256.7L681.5 256.7L682.9 256.8L685.3 256.5L686.7 256.4L686.700 255z" fill="#f4fbef"/>
<clipPath id="c315"><path d="M352 315.8L686.7 315.8L686.7 350.8L352 350.8L352 341.4L359.2 330.7L352 320z"/></clipPath>
<g clip-path="url(#c315)">
<rect x="352" y="315.8" width="344.7" height="35" fill="#5b5b5b"/>
<use href="#fw" x="352" y="320" width="48" height="28"/>
<use href="#fw" x="400" y="320" width="48" height="28"/>
<use href="#fw" x="448" y="320" width="48" height="28"/>
<use href="#fw" x="496" y="320" width="48" height="28"/>
<use href="#fw" x="544" y="320" width="48" height="28"/>
<use href="#fw" x="592" y="320" width="48" height="28"/>
<use href="#fw" x="640" y="320" width="48" height="28"/>
<use href="#fw" x="688" y="320" width="48" height="28"/>
<path d="M352 350.8L352 340.9L353.9 340.6L355.5 340.4L356.7 342L357.7 341.8L359.1 341.4L360.5 340.9L362.3 340.5L363.4 340.3L364.5 340.9L366.3 341L367.3 340.8L369.3 340.4L370.8 340.9L372.4 341L374 341.3L375.6 342.1L377.1 341L378 342.1L379.4 341L381.3 341.4L382.9 342.1L384.1 341.4L385.9 340.7L387.6 340.5L389.2 341.5L391.1 342.1L392.5 341L393.5 341.3L394.9 340.6L396.8 341.2L398.4 340.8L399.5 340.3L400.7 340.7L402.1 341L403.8 342L404.9 341.4L405.9 341.7L407.8 340.9L409.5 340.9L410.4 341.7L411.6 340.9L412.9 340.8L414.2 341.1L415.5 341.5L416.7 340.7L417.6 340.5L419.1 340.9L420.8 341.2L422.4 342.2L423.3 340.8L424.3 341L425.8 341.7L427.1 342.3L427.9 342.3L429 342.4L429.9 342.5L431.5 342.6L433 341.2L435 341.2L435.9 341.5L437.3 341.4L438.3 340.7L439.8 341.1L440.8 341.2L442.4 341.7L443.8 341.3L445 340.9L446.1 341.1L447.1 341.7L448.7 341.7L449.6 341.2L450.9 340.6L452.8 341.6L454.2 341.8L455.3 341L456.7 341.7L458.3 340.6L459.8 341.9L461.5 342.3L463.4 341.2L464.6 341.4L466.5 341.2L468.4 342L469.8 341.8L471.7 342L472.9 342.2L474 341.4L475.9 342L477.1 341.2L478.6 342L480.2 342.4L481.9 342.3L483.4 341.4L484.7 341.4L486.1 342L487.3 340.8L488.9 340.8L490.2 340.5L492 340.7L493.2 341.8L494.6 341.1L496.4 341.1L497.7 342.2L499.4 342.1L500.5 342.2L502 342.2L503.3 342.2L505 341.4L506.6 341.9L508.5 342.3L510.2 341L511.8 341.6L512.7 341.4L514.5 342.1L516.4 340.9L517.9 341.9L519.5 341.2L520.4 342.1L522.2 341.9L523.4 342.1L525.2 342L526.7 341.3L527.9 341.1L529.1 341.3L530 341.8L531.3 340.9L532.4 341L533.7 341.8L534.7 341L535.8 340.7L537.5 340.5L538.4 341.2L540.1 341.9L541.5 341.2L543.4 341.8L544.7 341.6L546.6 342.4L548.5 341L549.7 341.1L550.8 341.8L551.7 342.2L553.2 341.9L554.5 342.3L555.9 342.4L557.8 342L559.8 341.6L561 342.1L562.4 341.3L564 341.3L565 342L566.4 342.4L567.9 342.5L569 341.2L570.5 341.8L572.2 341.8L573.2 341.3L574.1 341.1L576 341L577.6 341.5L578.6 341.8L579.5 340.9L581 340.6L582.9 341L584.5 342.1L585.5 342.5L586.3 341.9L587.9 342.4L589.2 342.5L590.7 341.7L591.7 341L593 341L594.3 341.8L595.5 341.8L596.4 340.9L598 341.9L599.2 340.7L600.3 340.9L601.6 341.4L602.8 341.7L604.5 342L606.1 341.7L607.3 342.1L608.4 342.3L609.8 341.9L611.2 341.8L612.4 341.7L614.1 341.2L615.6 341.3L616.9 341.1L618.4 341.7L619.4 340.8L620 341.7L621.2 343.4L623.4 347.4L696.7 347.4L696.7 350.8z" fill="#606060"/>
<path d="M352 340.9L353.9 340.6L355.5 340.4L356.7 342L357.7 341.8L359.1 341.4L360.5 340.9L362.3 340.5L363.4 340.3L364.5 340.9L366.3 341L367.3 340.8L369.3 340.4L370.8 340.9L372.4 341L374 341.3L375.6 342.1L377.1 341L378 342.1L379.4 341L381.3 341.4L382.9 342.1L384.1 341.4L385.9 340.7L387.6 340.5L389.2 341.5L391.1 342.1L392.5 341L393.5 341.3L394.9 340.6L396.8 341.2L398.4 340.8L399.5 340.3L400.7 340.7L402.1 341L403.8 342L404.9 341.4L405.9 341.7L407.8 340.9L409.5 340.9L410.4 341.7L411.6 340.9L412.9 340.8L414.2 341.1L415.5 341.5L416.7 340.7L417.6 340.5L419.1 340.9L420.8 341.2L422.4 342.2L423.3 340.8L424.3 341L425.8 341.7L427.1 342.3L427.9 342.3L429 342.4L429.9 342.5L431.5 342.6L433 341.2L435 341.2L435.9 341.5L437.3 341.4L438.3 340.7L439.8 341.1L440.8 341.2L442.4 341.7L443.8 341.3L445 340.9L446.1 341.1L447.1 341.7L448.7 341.7L449.6 341.2L450.9 340.6L452.8 341.6L454.2 341.8L455.3 341L456.7 341.7L458.3 340.6L459.8 341.9L461.5 342.3L463.4 341.2L464.6 341.4L466.5 341.2L468.4 342L469.8 341.8L471.7 342L472.9 342.2L474 341.4L475.9 342L477.1 341.2L478.6 342L480.2 342.4L481.9 342.3L483.4 341.4L484.7 341.4L486.1 342L487.3 340.8L488.9 340.8L490.2 340.5L492 340.7L493.2 341.8L494.6 341.1L496.4 341.1L497.7 342.2L499.4 342.1L500.5 342.2L502 342.2L503.3 342.2L505 341.4L506.6 341.9L508.5 342.3L510.2 341L511.8 341.6L512.7 341.4L514.5 342.1L516.4 340.9L517.9 341.9L519.5 341.2L520.4 342.1L522.2 341.9L523.4 342.1L525.2 342L526.7 341.3L527.9 341.1L529.1 341.3L530 341.8L531.3 340.9L532.4 341L533.7 341.8L534.7 341L535.8 340.7L537.5 340.5L538.4 341.2L540.1 341.9L541.5 341.2L543.4 341.8L544.7 341.6L546.6 342.4L548.5 341L549.7 341.1L550.8 341.8L551.7 342.2L553.2 341.9L554.5 342.3L555.9 342.4L557.8 342L559.8 341.6L561 342.1L562.4 341.3L564 341.3L565 342L566.4 342.4L567.9 342.5L569 341.2L570.5 341.8L572.2 341.8L573.2 341.3L574.1 341.1L576 341L577.6 341.5L578.6 341.8L579.5 340.9L581 340.6L582.9 341L584.5 342.1L585.5 342.5L586.3 341.9L587.9 342.4L589.2 342.5L590.7 341.7L591.7 341L593 341L594.3 341.8L595.5 341.8L596.4 340.9L598 341.9L599.2 340.7L600.3 340.9L601.6 341.4L602.8 341.7L604.5 342L606.1 341.7L607.3 342.1L608.4 342.3L609.8 341.9L611.2 341.8L612.4 341.7L614.1 341.2L615.6 341.3L616.9 341.1L618.4 341.7L619.4 340.8L620 341.7L621.2 343.4L623.4 347.4L696.7 347.4" stroke="#b9b9b9" stroke-width=".8" fill="none" opacity=".85"/>
<rect x="352" y="347.6" width="334.7" height="3.200" fill="#555" opacity=".6"/>
<rect x="680.9" y="315.8" width="5.800" height="35" fill="#111"/>
<rect x="682.1" y="317.1" width="3.300" height="3" rx=".5" fill="#fff"/>
<rect x="682.1" y="322.2" width="3.300" height="3" rx=".5" fill="#fff"/>
<rect x="682.1" y="327.2" width="3.300" height="3" rx=".5" fill="#fff"/>
<rect x="682.1" y="332.2" width="3.300" height="3" rx=".5" fill="#fff"/>
<rect x="682.1" y="337.3" width="3.300" height="3" rx=".5" fill="#fff"/>
<rect x="682.1" y="342.4" width="3.300" height="3" rx=".5" fill="#fff"/>
<rect x="682.1" y="347.4" width="3.300" height="3" rx=".5" fill="#fff"/>
</g>
<rect x="352" y="353.600" width="334.700" height="13" fill="url(#ggr)"/>
<path d="M352 353L352 354.9L353.3 354L355.8 354L357.1 354.5L358.6 354.9L360 355L361.6 354.6L364 354.7L366.4 354.7L367.6 354.9L369.5 354.3L370.9 354.8L372.8 355L375 355L376.9 354.7L378.8 354.2L381.3 354.1L383.5 354.9L385.5 354.1L387.8 354.5L389.1 353.9L391 353.8L393.4 354.3L395.2 354.3L397.2 354.8L398.8 354.3L400.7 354.2L402.6 354.4L404.3 354.6L406.2 354L408.7 354.2L410.4 354.2L412.8 354.9L414.6 354.4L415.8 354.8L417.2 354.5L418.7 354.2L420.3 354L421.5 354.4L423.7 354.6L425.1 354.6L426.2 354.3L428.5 354.9L430.2 354.9L432 354.5L433.9 355L436.1 354.5L438.2 354.6L439.8 354.8L442.1 354.6L444.5 353.9L446.3 354.5L447.9 354L450 354.3L451.4 353.9L453.9 354.1L455.2 354L456.6 354.7L457.9 354.2L459.2 354.3L460.5 354.2L462.7 354.8L465 354L466.6 354.7L467.7 354.1L469.5 354.2L471.7 354.6L473.4 354.2L474.8 354.1L476 354.5L477.3 354.9L479.3 354L481.1 354.4L482.2 354.4L483.4 354.7L484.5 354.6L487 354.8L488.4 354.5L489.7 354.2L492 354.7L493.1 354.3L495.1 354L497.3 354.8L499.2 354.3L501.5 354.4L502.8 354.2L504.1 354.7L506 354.7L508.2 355L509.6 354.4L511.9 354.7L513.5 354.6L514.9 354.1L516.1 354.2L517.5 354.4L520 354L521.8 354.7L523.8 354.5L526 353.9L528.4 354.5L530.7 354.8L531.9 354L533.2 354.3L535.6 354.8L537.3 354.6L539.5 354.3L541.9 354.9L544.1 354.9L546.3 354.7L547.8 354.2L549.3 353.9L551.7 354.1L552.8 354.1L554 354.3L555.6 354L557.3 354.2L558.9 354.7L560.5 354.5L562.8 354.9L564.4 354L566.9 354.3L568.3 354L569.7 354.1L571 353.8L573.5 354.6L574.7 354.4L577 354.4L578.1 354.2L579.8 354.8L581.7 354.4L583.7 353.9L585.7 354.6L587.8 354.3L589.3 353.8L590.5 353.9L592.2 354.6L593.6 354.4L595.6 354.5L596.7 354.9L598.6 354.3L600.1 354.6L602.5 354.3L604.1 354.4L605.5 354.3L607.9 354.4L610.1 354.1L612.5 354.7L613.9 354.5L615.9 354.5L617.9 354.1L619.8 354.2L622 354.2L624.5 354.5L625.9 354.3L627.1 354.6L628.3 354.6L629.8 354.7L631.1 354.7L633.2 354.2L634.5 354.2L636.5 354.1L637.6 354.3L639.8 354L642.2 354.3L643.5 353.9L645.2 354.3L646.5 353.9L648.3 354L650 354.3L652.1 354.5L653.5 354.1L655.8 353.8L657.1 353.8L659.4 354.3L661.8 354.5L663.3 354.3L665.5 354.1L667.7 354.2L668.8 354.2L670.7 354L673.1 354.8L674.9 354.9L677 354.5L678.3 354.9L680.7 354.5L682.3 353.9L684.3 354.7L686 354.2L686.7 354.4L686.700 353z" fill="#f4fbef"/>
<rect x="371.800" y="116" width="2.200" height="78" fill="#0a0a0a"/>
</svg>
<span class="t" id="t0" style="left:120.8px;top:6.59px;font-size:9.7px;color:#1e1e1e;transform-origin:0 0;transform:scaleX(0.9401);">My Movie - Movie Maker</span>
<span class="t" id="t1" style="left:14.8px;top:27.28px;font-size:9px;color:#fff;transform-origin:0 0;transform:scaleX(0.8818);">File</span>
<span class="t" id="t2" style="left:52.5px;top:27.28px;font-size:9px;color:#3b3b3b;transform-origin:0 0;transform:scaleX(0.9161);">Home</span>
<span class="t" id="t3" style="left:97px;top:27.28px;font-size:9px;color:#3b3b3b;transform-origin:0 0;transform:scaleX(0.9589);">Animations</span>
<span class="t" id="t4" style="left:162px;top:27.28px;font-size:9px;color:#3b3b3b;transform-origin:0 0;transform:scaleX(0.9225);">Visual Effects</span>
<span class="t" id="t5" style="left:234px;top:27.28px;font-size:9px;color:#3b3b3b;transform-origin:0 0;transform:scaleX(0.9637);">Project</span>
<span class="t" id="t6" style="left:282.5px;top:27.28px;font-size:9px;color:#3b3b3b;transform-origin:0 0;transform:scaleX(0.9556);">View</span>
<span class="t" id="t7" style="left:333.8px;top:27.28px;font-size:9px;color:#3b3b3b;transform-origin:0 0;transform:scaleX(0.8830);">Edit</span>
<span class="t" id="t8" style="left:381.3px;top:27.28px;font-size:9px;color:#3b3b3b;transform-origin:0 0;transform:scaleX(0.9893);">Options</span>
<span class="t" id="t9" style="left:436.3px;top:27.28px;font-size:9px;color:#3b3b3b;transform-origin:0 0;transform:scaleX(0.9363);">Format</span>
<span class="t" id="t10" style="left:319.3px;top:8.48px;font-size:9px;color:#45451f;transform-origin:0 0;transform:scaleX(0.9347);">Video Tools</span>
<span class="t" id="t11" style="left:375.5px;top:8.48px;font-size:9px;color:#2f4a20;transform-origin:0 0;transform:scaleX(0.9240);">Music Tools</span>
<span class="t" id="t12" style="left:431.8px;top:8.48px;font-size:9px;color:#4a2f55;transform-origin:0 0;transform:scaleX(0.8831);">Text Tools</span>
<span class="t" id="t13" style="left:710.9px;top:27.30px;font-size:8.5px;color:#fff;transform-origin:0 0;transform:scaleX(1.0000);font-weight:bold">?</span>
<span class="t" id="t14" style="left:10px;top:73.28px;font-size:9px;color:#3b3b3b;transform-origin:0 0;transform:scaleX(0.8559);">Paste</span>
<span class="t" id="t15" style="left:9.5px;top:97.98px;font-size:9px;color:#6a6a6a;transform-origin:0 0;transform:scaleX(0.9732);">Clipboard</span>
<span class="t" id="t16" style="left:63.3px;top:54.08px;font-size:9px;color:#222;transform-origin:0 0;transform:scaleX(0.9112);">Segoe UI</span>
<span class="t" id="t17" style="left:129px;top:54.08px;font-size:9px;color:#222;transform-origin:0 0;transform:scaleX(0.8487);">48</span>
<span class="t s" id="t18" style="left:66px;top:74.23px;font-size:10px;color:#1f3050;transform-origin:0 0;transform:scaleX(1.0000);">B</span>
<span class="t s" id="t19" style="left:83.5px;top:74.23px;font-size:10px;color:#1f3050;transform-origin:0 0;transform:scaleX(1.0000);font-style:italic">I</span>
<span class="t s" id="t20" style="left:101.6px;top:72.47px;font-size:11.5px;color:#1f3050;transform-origin:0 0;transform:scaleX(1.0000);">A</span>
<span class="t s" id="t21" style="left:128.6px;top:73.95px;font-size:11.4px;color:#1f3050;transform-origin:0 0;transform:scaleX(1.0000);">A</span>
<span class="t s" id="t22" style="left:146px;top:77.14px;font-size:7.6px;color:#1f3050;transform-origin:0 0;transform:scaleX(1.0000);">A</span>
<span class="t" id="t23" style="left:101px;top:97.98px;font-size:9px;color:#6a6a6a;transform-origin:0 0;transform:scaleX(0.9159);">Font</span>
<span class="t s" id="t24" style="left:170px;top:53.94px;font-size:9.5px;color:#1f3050;transform-origin:0 0;transform:scaleX(1.0000);">A</span>
<span class="t s" id="t25" style="left:175.6px;top:55.62px;font-size:7.5px;color:#8a93a5;transform-origin:0 0;transform:scaleX(1.0000);">A</span>
<span class="t" id="t26" style="left:183.8px;top:54.08px;font-size:9px;color:#3b3b3b;transform-origin:0 0;transform:scaleX(0.8994);">Transparency</span>
<span class="t" id="t27" style="left:181.7px;top:97.98px;font-size:9px;color:#6a6a6a;transform-origin:0 0;transform:scaleX(0.9112);">Paragraph</span>
<span class="t s" id="t28" style="left:250.6px;top:46.76px;font-size:22.5px;color:#1f3050;transform-origin:0 0;transform:scaleX(1.0000);font-style:italic">A</span>
<span class="t" id="t29" style="left:252px;top:73.28px;font-size:9px;color:#3b3b3b;transform-origin:0 0;transform:scaleX(0.8894);">Edit</span>
<span class="t" id="t30" style="left:252.5px;top:82.78px;font-size:9px;color:#3b3b3b;transform-origin:0 0;transform:scaleX(0.9300);">text</span>
<span class="t" id="t31" style="left:292px;top:48.28px;font-size:9px;color:#3b3b3b;transform-origin:0 0;transform:scaleX(0.9822);">Background color</span>
<span class="t" id="t32" style="left:292.8px;top:64.58px;font-size:9px;color:#3b3b3b;transform-origin:0 0;transform:scaleX(0.9314);">Start time:</span>
<span class="t" id="t33" style="left:292.8px;top:80.78px;font-size:9px;color:#3b3b3b;transform-origin:0 0;transform:scaleX(0.9476);">Text duration:</span>
<span class="t" id="t34" style="left:350.5px;top:64.48px;font-size:9px;color:#222;transform-origin:0 0;transform:scaleX(0.8624);">0.00s</span>
<span class="t" id="t35" style="left:350.5px;top:80.78px;font-size:9px;color:#222;transform-origin:0 0;transform:scaleX(0.8727);">3.00</span>
<span class="t" id="t36" style="left:310.8px;top:97.98px;font-size:9px;color:#6a6a6a;transform-origin:0 0;transform:scaleX(0.9674);">Adjust</span>
<span class="t" id="t37" style="left:546.7px;top:97.98px;font-size:9px;color:#6a6a6a;transform-origin:0 0;transform:scaleX(0.8991);">Effects</span>
<span class="t" id="t38" style="left:644px;top:73.08px;font-size:9px;color:#3b3b3b;transform-origin:0 0;transform:scaleX(0.9919);">Outline</span>
<span class="t" id="t39" style="left:648.7px;top:83.08px;font-size:9px;color:#3b3b3b;transform-origin:0 0;transform:scaleX(0.8304);">size</span>
<span class="t" id="t40" style="left:675.4px;top:73.08px;font-size:9px;color:#ababab;transform-origin:0 0;transform:scaleX(1.0024);">Outline</span>
<span class="t" id="t41" style="left:677px;top:83.08px;font-size:9px;color:#ababab;transform-origin:0 0;transform:scaleX(0.9480);">color</span>
<span class="t" id="t42" style="left:117.2px;top:229.52px;font-size:26.2px;color:#4b9fc3;transform-origin:0 0;transform:scaleX(0.9771);">Song 2</span>
<span class="t" id="t43" style="left:225px;top:362.88px;font-size:9px;color:#3b3b3b;transform-origin:0 0;transform:scaleX(0.9135);">00:01.32/02:34.91</span>
<span class="t" id="t44" style="left:11.3px;top:469.58px;font-size:9px;color:#6f7f99;transform-origin:0 0;transform:scaleX(0.9885);">Caption 1 of 4</span>
<span class="t s" id="t45" style="left:357.2px;top:177.83px;font-size:10px;color:#1f3050;transform-origin:0 0;transform:scaleX(1.0000);">A</span>
<span class="t" id="t46" style="left:366.7px;top:178.24px;font-size:9.4px;color:#444;transform-origin:0 0;transform:scaleX(0.9186);">Song 2</span>
<svg class="a" style="left:250px;top:46px;width:24px;height:20px" viewBox="250 46 24 20"><path d="M254.300 63.400l1.200-3.400 11-9.600 2.300 2.500-11 9.400z" fill="#f4cb48" stroke="#8a6d28" stroke-width=".6"/><path d="M257.100 61.300l9.800-8.500" stroke="#fbe9a0" stroke-width=".8"/><path d="M266.500 50.400l1.700-1.500 2.300 2.400-1.700 1.600z" fill="#e98a8e" stroke="#a85a60" stroke-width=".4"/><path d="M254.300 63.400l1.200-3.400 2.200 2.300z" fill="#ecdcb4"/><path d="M254.300 63.400l.5-1.400.9 1z" fill="#333"/></svg>
</body></html>
